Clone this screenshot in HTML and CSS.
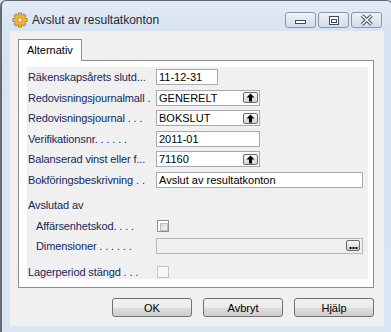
FILE: index.html
```html
<!DOCTYPE html>
<html>
    <head>
        <title>Avslut av resultatkonton</title>
        <link rel="stylesheet" href="styles.css">
    </head>

    <body>
        <div class="window">
            <div class="titlebar">
                <svg class="app-icon" width="16" height="16" viewBox="0 0 16 16">
                    <defs>
                        <g id="gear">
                            <circle cx="8" cy="8" r="5"/>
                            <rect x="6.7" y="1.2" width="2.6" height="4" transform="rotate(0 8 8)"/>
                            <rect x="6.7" y="1.2" width="2.6" height="4" transform="rotate(45 8 8)"/>
                            <rect x="6.7" y="1.2" width="2.6" height="4" transform="rotate(90 8 8)"/>
                            <rect x="6.7" y="1.2" width="2.6" height="4" transform="rotate(135 8 8)"/>
                            <rect x="6.7" y="1.2" width="2.6" height="4" transform="rotate(180 8 8)"/>
                            <rect x="6.7" y="1.2" width="2.6" height="4" transform="rotate(225 8 8)"/>
                            <rect x="6.7" y="1.2" width="2.6" height="4" transform="rotate(270 8 8)"/>
                            <rect x="6.7" y="1.2" width="2.6" height="4" transform="rotate(315 8 8)"/>
                        </g>
                    </defs>
                    <use href="#gear" fill="#8a7a5c" stroke="#8a7a5c" stroke-width="1.3"/>
                    <use href="#gear" fill="#f4b630"/>
                    <circle cx="8" cy="8" r="2.2" fill="#fdf3d2" stroke="#a0803a" stroke-width="0.8"/>
                </svg>
                <span class="title">Avslut av resultatkonton</span>
                <div class="caption-buttons">
                    <div class="cap">
                        <svg width="31" height="16" viewBox="0 0 31 16">
                            <rect x="10.5" y="8.5" width="10" height="3" fill="#fff" stroke="#3e4b5e"/>
                        </svg>
                    </div>
                    <div class="cap">
                        <svg width="31" height="16" viewBox="0 0 31 16">
                            <rect x="11.5" y="4.5" width="9" height="8" fill="#fff" stroke="#3e4b5e"/>
                            <rect x="13.5" y="7.5" width="5" height="3" fill="none" stroke="#3e4b5e"/>
                        </svg>
                    </div>
                    <div class="cap">
                        <svg width="31" height="16" viewBox="0 0 31 16">
                            <path d="M11 3.5 L20.5 12.5 M20.5 3.5 L11 12.5" stroke="#3e4b5e" stroke-width="3.6"/>
                            <path d="M11 3.5 L20.5 12.5 M20.5 3.5 L11 12.5" stroke="#fff" stroke-width="1.6"/>
                        </svg>
                    </div>
                </div>
            </div>

            <div class="client">
                <div class="tabs">
                    <div class="tab">Alternativ</div>
                </div>
                <div class="panel">
                    <div class="content">
                        <div class="row">
                            <span class="lbl">Räkenskapsårets slutd...</span>
                            <div class="field w-date">11-12-31</div>
                        </div>
                        <div class="row">
                            <span class="lbl">Redovisningsjournalmall .</span>
                            <div class="field w-code">GENERELT<span class="lookup"><svg width="9" height="9" viewBox="0 0 9 9"><path d="M4.5 0.5 L8.5 4.5 L6 4.5 L6 8.5 L3 8.5 L3 4.5 L0.5 4.5 Z" fill="#000"/></svg></span></div>
                        </div>
                        <div class="row">
                            <span class="lbl">Redovisningsjournal . . .</span>
                            <div class="field w-code">BOKSLUT<span class="lookup"><svg width="9" height="9" viewBox="0 0 9 9"><path d="M4.5 0.5 L8.5 4.5 L6 4.5 L6 8.5 L3 8.5 L3 4.5 L0.5 4.5 Z" fill="#000"/></svg></span></div>
                        </div>
                        <div class="row">
                            <span class="lbl">Verifikationsnr. . . . . .</span>
                            <div class="field w-code">2011-01</div>
                        </div>
                        <div class="row">
                            <span class="lbl">Balanserad vinst eller f...</span>
                            <div class="field w-code">71160<span class="lookup"><svg width="9" height="9" viewBox="0 0 9 9"><path d="M4.5 0.5 L8.5 4.5 L6 4.5 L6 8.5 L3 8.5 L3 4.5 L0.5 4.5 Z" fill="#000"/></svg></span></div>
                        </div>
                        <div class="row">
                            <span class="lbl">Bokföringsbeskrivning . .</span>
                            <div class="field w-text">Avslut av resultatkonton</div>
                        </div>

                        <div class="row group-title">
                            <span class="lbl">Avslutad av</span>
                        </div>
                        <div class="row check-row">
                            <span class="lbl indent">Affärsenhetskod. . . .</span>
                            <span class="check"></span>
                        </div>
                        <div class="row dim-row">
                            <span class="lbl indent">Dimensioner . . . . . .</span>
                            <div class="field w-text disabled"><span class="lookup dots"><svg width="9" height="9" viewBox="0 0 9 9"><rect x="0.5" y="6" width="2" height="2"/><rect x="3.5" y="6" width="2" height="2"/><rect x="6.5" y="6" width="2" height="2"/></svg></span></div>
                        </div>
                        <div class="row last-row">
                            <span class="lbl">Lagerperiod stängd . . .</span>
                            <span class="check off"></span>
                        </div>
                    </div>
                </div>

                <div class="button-bar">
                    <button class="btn">OK</button>
                    <button class="btn">Avbryt</button>
                    <button class="btn">Hjälp</button>
                </div>
            </div>
        </div>
    </body>
</html>
```

FILE: styles.css
```css
html, body {
    margin: 0;
    width: 391px;
    height: 332px;
    overflow: hidden;
    background: #dae5f3;
}

.window {
    width: 390px; /* right and bottom frame run past the shot */
    height: 334px;
    border-top: 1px solid #5f6670;
    border-left: 2px solid #666b72;
    border-right: 1px solid #5f6670;
    border-top-left-radius: 6px;
    border-top-right-radius: 6px;
    background: linear-gradient(#e2ebf6, #d8e3f1 30px, #dae5f3);
    font-family: "Liberation Sans", Arial, sans-serif;
    font-size: 11px;
}

.titlebar {
    height: 30px;
    box-sizing: border-box;
    padding: 8px 10px 0 10px;
    display: flex;
    align-items: center;
}

.app-icon {
    flex: none;
}

.title {
    margin-left: 4px;
    font-size: 12px;
    color: #1c2838;
    white-space: nowrap;
}

.caption-buttons {
    margin-left: auto;
    display: flex;
    gap: 2px;
}

.cap {
    width: 31px;
    height: 16px;
    box-sizing: border-box;
    border: 1px solid #8a97a9;
    border-radius: 3px;
    background: linear-gradient(#f0f4f9, #dfe6ef 50%, #d3dce8);
    display: flex;
    align-items: center;
    justify-content: center;
}

.cap svg {
    display: block;
    margin: -1px;
}

/* client area */
.client {
    margin-left: 8px;
    width: 374px;
    height: 295px;
    box-sizing: border-box;
    padding: 8px 10px 0 8px;
    background: #f0f0f0;
}

.tabs {
    display: flex;
    height: 21px;
}

.tab {
    position: relative;
    z-index: 1;
    width: 64px;
    height: 22px;
    box-sizing: border-box;
    border: 1px solid #898c95;
    border-bottom: none;
    background: #fff;
    padding: 4px 0 0 8px;
    color: #000;
    font-size: 11px;
}

.panel {
    width: 356px;
    height: 228px;
    box-sizing: border-box;
    border: 1px solid #898c95;
    background: #fff;
    padding: 6px 5px 8px 8px;
}

.content {
    height: 212px;
    background: #f0f0f0;
    padding: 2px 0 0 1px;
    box-sizing: border-box;
    display: flex;
    flex-direction: column;
    gap: 4.6px;
}

.row {
    display: flex;
    align-items: center;
    height: 16px;
    flex: none;
}

.lbl {
    width: 128px;
    flex: none;
    color: #13295a;
    white-space: nowrap;
    overflow: hidden;
    letter-spacing: -0.12px;
}

.lbl.indent {
    width: 120px;
    padding-left: 8px;
}

.group-title {
    margin-top: 4.4px;
}

.check-row {
    margin-top: 0.4px;
}

.dim-row {
    margin-top: -0.6px;
}

.last-row {
    margin-top: 5.4px;
}

.field {
    height: 16px;
    box-sizing: border-box;
    border: 1px solid #a6a9b0;
    background: #fff;
    color: #000;
    padding: 0 2px 0 2px;
    line-height: 14px;
    display: flex;
    align-items: center;
    justify-content: space-between;
    white-space: nowrap;
}

.w-date {
    width: 62px;
}

.w-code {
    width: 104px;
}

.w-text {
    width: 207px;
}

.field.disabled {
    background: #f0f0f0;
    border-color: #b9b9b9;
    justify-content: flex-end;
}

.lookup {
    width: 15px;
    height: 11px;
    box-sizing: border-box;
    border: 1px solid #6a6a6a;
    border-radius: 2px;
    background: linear-gradient(#fdfdfd, #e6e6e6 50%, #d2d2d2);
    display: flex;
    align-items: center;
    justify-content: center;
    margin-right: -1px;
}

.lookup svg {
    display: block;
}

.lookup.dots {
    width: 14px;
    margin-right: 0;
}

.check {
    width: 12px;
    height: 12px;
    box-sizing: border-box;
    margin-left: 1px;
    border: 1px solid #8e8f8f;
    background: #fff;
    padding: 2px;
}

.check::before {
    content: "";
    display: block;
    width: 6px;
    height: 6px;
    border: 1px solid #b8bcc4;
    background: linear-gradient(135deg, #d4d8de, #f4f5f7);
}

.check.off {
    border-color: #c4c4c4;
    background: #f7f7f7;
}

.check.off::before {
    display: none;
}

/* bottom buttons */
.button-bar {
    margin-top: 10px;
    display: flex;
    justify-content: flex-end;
    gap: 11px;
}

.btn {
    width: 80px;
    height: 19px;
    box-sizing: border-box;
    border: 1px solid #707070;
    border-radius: 3px;
    background: linear-gradient(#f2f2f2, #ebebeb 50%, #dddddd 50%, #cfcfcf);
    font-family: "Liberation Sans", Arial, sans-serif;
    font-size: 11px;
    color: #000;
    padding: 0;
}
```
